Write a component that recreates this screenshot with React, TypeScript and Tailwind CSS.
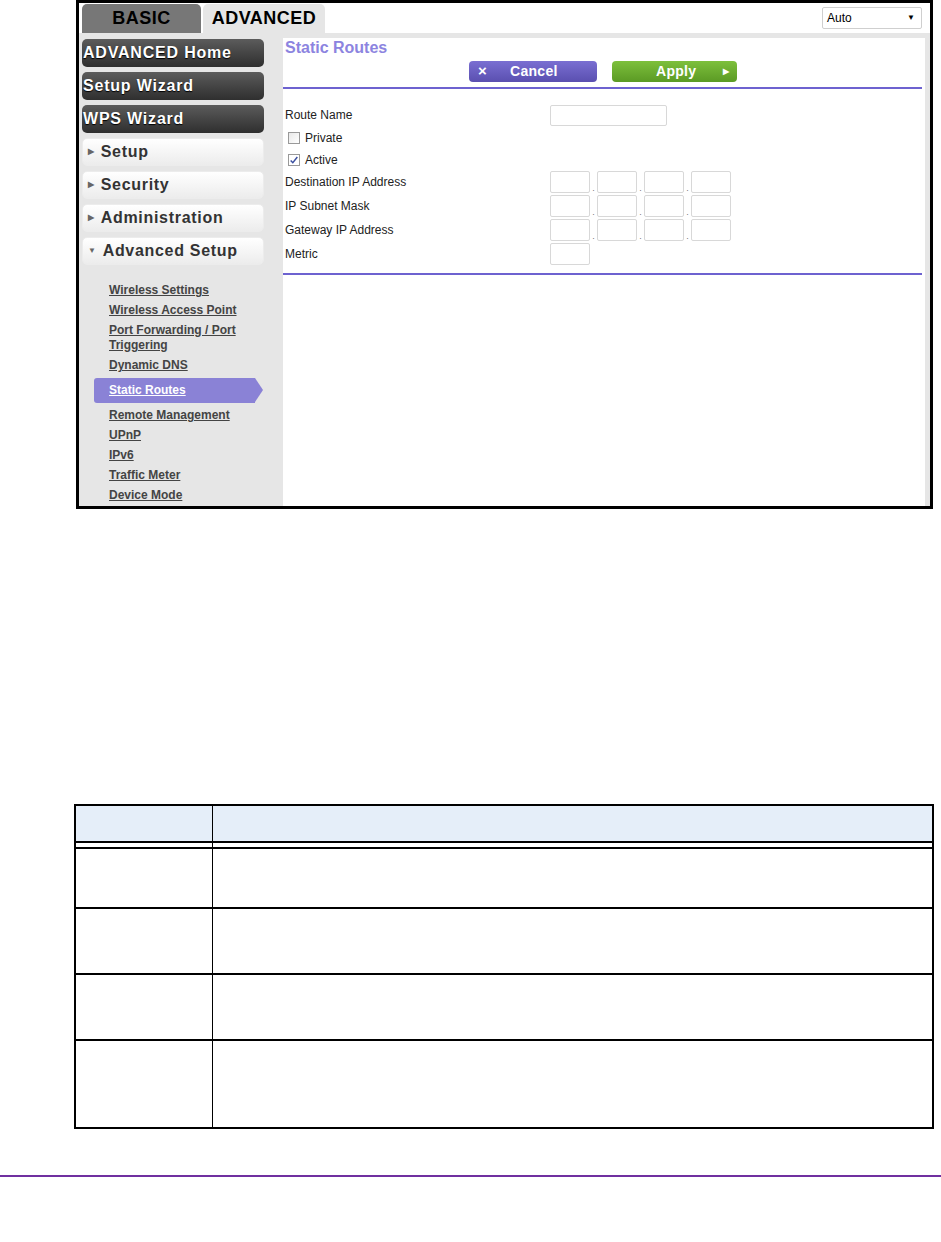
import { Fragment } from 'react';

const dark = ['ADVANCED Home', 'Setup Wizard', 'WPS Wizard'];
const light = ['Setup', 'Security', 'Administration'];

function IpInputs() {
  return (
    <div className="flex items-end">
      {[0, 1, 2, 3].map((i) => (
        <Fragment key={i}>
          {i > 0 && <span className="w-[7px] text-center text-[9px] leading-[10px] text-[#777]">.</span>}
          <div className="h-[22px] w-[40px] rounded-[2px] border border-[#d8d8d8] bg-white" />
        </Fragment>
      ))}
    </div>
  );
}

function Row({ label, children }: { label: string; children: React.ReactNode }) {
  return (
    <div className="flex h-[24px] items-center">
      <span className="w-[265px] text-[12px] text-[#222]">{label}</span>
      {children}
    </div>
  );
}

export default function App() {
  const subLinks1 = ['Wireless Settings', 'Wireless Access Point'];
  const subLinks2 = ['Remote Management', 'UPnP', 'IPv6', 'Traffic Meter', 'Device Mode'];

  return (
    <div className="min-h-[1242px] w-[941px] bg-white font-['Liberation_Sans',Arial,sans-serif]">
      {/* router screenshot */}
      <div className="ml-[76px] flex h-[509px] w-[857px] flex-col border-[3px] border-black bg-[#e6e6e6]">
        <div className="flex h-[30px] items-end justify-between bg-white pl-[3px] pr-[8px]">
          <div className="flex gap-[2px]">
            <div className="flex h-[29px] w-[119px] items-center justify-center rounded-t-[5px] bg-[#777] text-[18px] font-bold tracking-[0.5px] text-black">
              BASIC
            </div>
            <div className="flex h-[29px] w-[122px] items-center justify-center rounded-t-[5px] bg-[#e6e6e6] text-[18px] font-bold tracking-[0.5px] text-black">
              ADVANCED
            </div>
          </div>
          <div className="mb-[1px] flex h-[22px] w-[100px] items-center justify-between self-center rounded-[2px] border border-[#cfcfcf] bg-white pl-[4px] pr-[6px] text-[12px] text-black">
            <span>Auto</span>
            <span className="text-[8px]">▼</span>
          </div>
        </div>
        <div className="h-[5px]" />
        <div className="flex min-h-0 flex-1">
          {/* sidebar */}
          <div className="w-[204px] pl-[3px] pt-[1px]">
            <div className="flex w-[182px] flex-col gap-[5px]">
              {dark.map((t) => (
                <div
                  key={t}
                  className="flex h-[28px] items-center rounded-[5px] bg-gradient-to-b from-[#5c5c5c] to-[#2f2f2f] pl-[1px] text-[16px] font-bold tracking-[0.8px] text-white [text-shadow:0_1px_1px_#000]"
                >
                  {t}
                </div>
              ))}
              {[...light, 'Advanced Setup'].map((t, i) => (
                <div
                  key={t}
                  className="flex h-[28px] items-center rounded-[5px] border border-[#ececec] bg-gradient-to-b from-white to-[#ececec] pl-[5px] text-[16px] font-bold tracking-[0.7px] text-[#333]"
                >
                  <span className="mr-[6px] text-[8px] text-[#666]">{i === 3 ? '▼' : '▶'}</span>
                  {t}
                </div>
              ))}
            </div>
            <div className="mt-[18px] flex flex-col gap-[5px] text-[12px] font-bold leading-[15px] text-[#444]">
              {subLinks1.map((t) => (
                <span key={t} className="pl-[27px] underline">{t}</span>
              ))}
              <span className="pl-[27px] underline">
                Port Forwarding / Port
                <br />
                Triggering
              </span>
              <span className="pl-[27px] underline">Dynamic DNS</span>
              <div className="ml-[12px] flex h-[25px] w-[169px]">
                <div className="flex flex-1 items-center rounded-l-[3px] bg-[#8a82d6] pl-[15px] text-white underline">
                  Static Routes
                </div>
                <div className="h-0 w-0 border-y-[12.5px] border-l-[8px] border-y-transparent border-l-[#8a82d6]" />
              </div>
              {subLinks2.map((t) => (
                <span key={t} className="pl-[27px] underline">{t}</span>
              ))}
            </div>
          </div>
          {/* content */}
          <div className="mr-[5px] flex-1 bg-white">
            <div className="mr-[3px]">
              <div className="pl-[2px] pt-[1px] text-[16px] font-bold leading-[18px] text-[#8c84e0]">Static Routes</div>
              <div className="mt-[4px] flex gap-[15px] pl-[186px]">
                <div className="flex h-[21px] w-[128px] items-center rounded-[4px] bg-gradient-to-b from-[#7a6fd2] to-[#5a4fb0] pl-[9px] text-[14px] font-bold tracking-[0.3px] text-white">
                  <span className="w-[32px] text-[15px]">×</span>
                  <span>Cancel</span>
                </div>
                <div className="flex h-[21px] w-[125px] items-center rounded-[4px] bg-gradient-to-b from-[#7dc03c] to-[#5b9a24] pl-[44px] text-[14px] font-bold tracking-[0.3px] text-white">
                  <span>Apply</span>
                  <span className="ml-[27px] text-[8px]">▶</span>
                </div>
              </div>
              <div className="mt-[5px] h-[2px] bg-[#6d62d0]" />
              <div className="pl-[2px] pt-[14px]">
                <Row label="Route Name">
                  <div className="h-[21px] w-[117px] rounded-[2px] border border-[#d8d8d8] bg-white" />
                </Row>
                <div className="flex h-[22px] items-center gap-[5px] pl-[3px] text-[12px] text-[#222]">
                  <span className="h-[12px] w-[12px] border border-[#999] bg-gradient-to-br from-[#e8e8e8] to-white" />
                  Private
                </div>
                <div className="flex h-[21px] items-center gap-[5px] pl-[3px] text-[12px] text-[#222]">
                  <span className="flex h-[12px] w-[12px] items-center justify-center border border-[#999] bg-white">
                    <svg viewBox="0 0 12 12" className="h-[10px] w-[10px]">
                      <path d="M2 6.5 L4.6 9.2 L10 2.5" fill="none" stroke="#3b4fa0" strokeWidth="1.8" />
                    </svg>
                  </span>
                  Active
                </div>
                <Row label="Destination IP Address"><IpInputs /></Row>
                <Row label="IP Subnet Mask"><IpInputs /></Row>
                <Row label="Gateway IP Address"><IpInputs /></Row>
                <Row label="Metric">
                  <div className="h-[22px] w-[40px] rounded-[2px] border border-[#d8d8d8] bg-white" />
                </Row>
              </div>
              <div className="mt-[7px] h-[2px] bg-[#6d62d0]" />
            </div>
          </div>
        </div>
      </div>

      {/* table */}
      <div className="ml-[74px] mt-[295px] w-[860px] border-2 border-black">
        <div className="flex h-[37px] border-b-2 border-black bg-[#e5eef9]">
          <div className="w-[137px] border-r border-black" />
          <div className="flex-1" />
        </div>
        <div className="flex h-[4px]">
          <div className="w-[137px] border-r border-black" />
        </div>
        {[60, 66, 66, 88].map((h, i) => (
          <div key={i} className="flex border-t-2 border-black" style={{ height: h }}>
            <div className="w-[137px] border-r border-black" />
            <div className="flex-1" />
          </div>
        ))}
      </div>

      <div className="mt-[46px] h-[2px] w-full bg-[#7030a0]" />
    </div>
  );
}
